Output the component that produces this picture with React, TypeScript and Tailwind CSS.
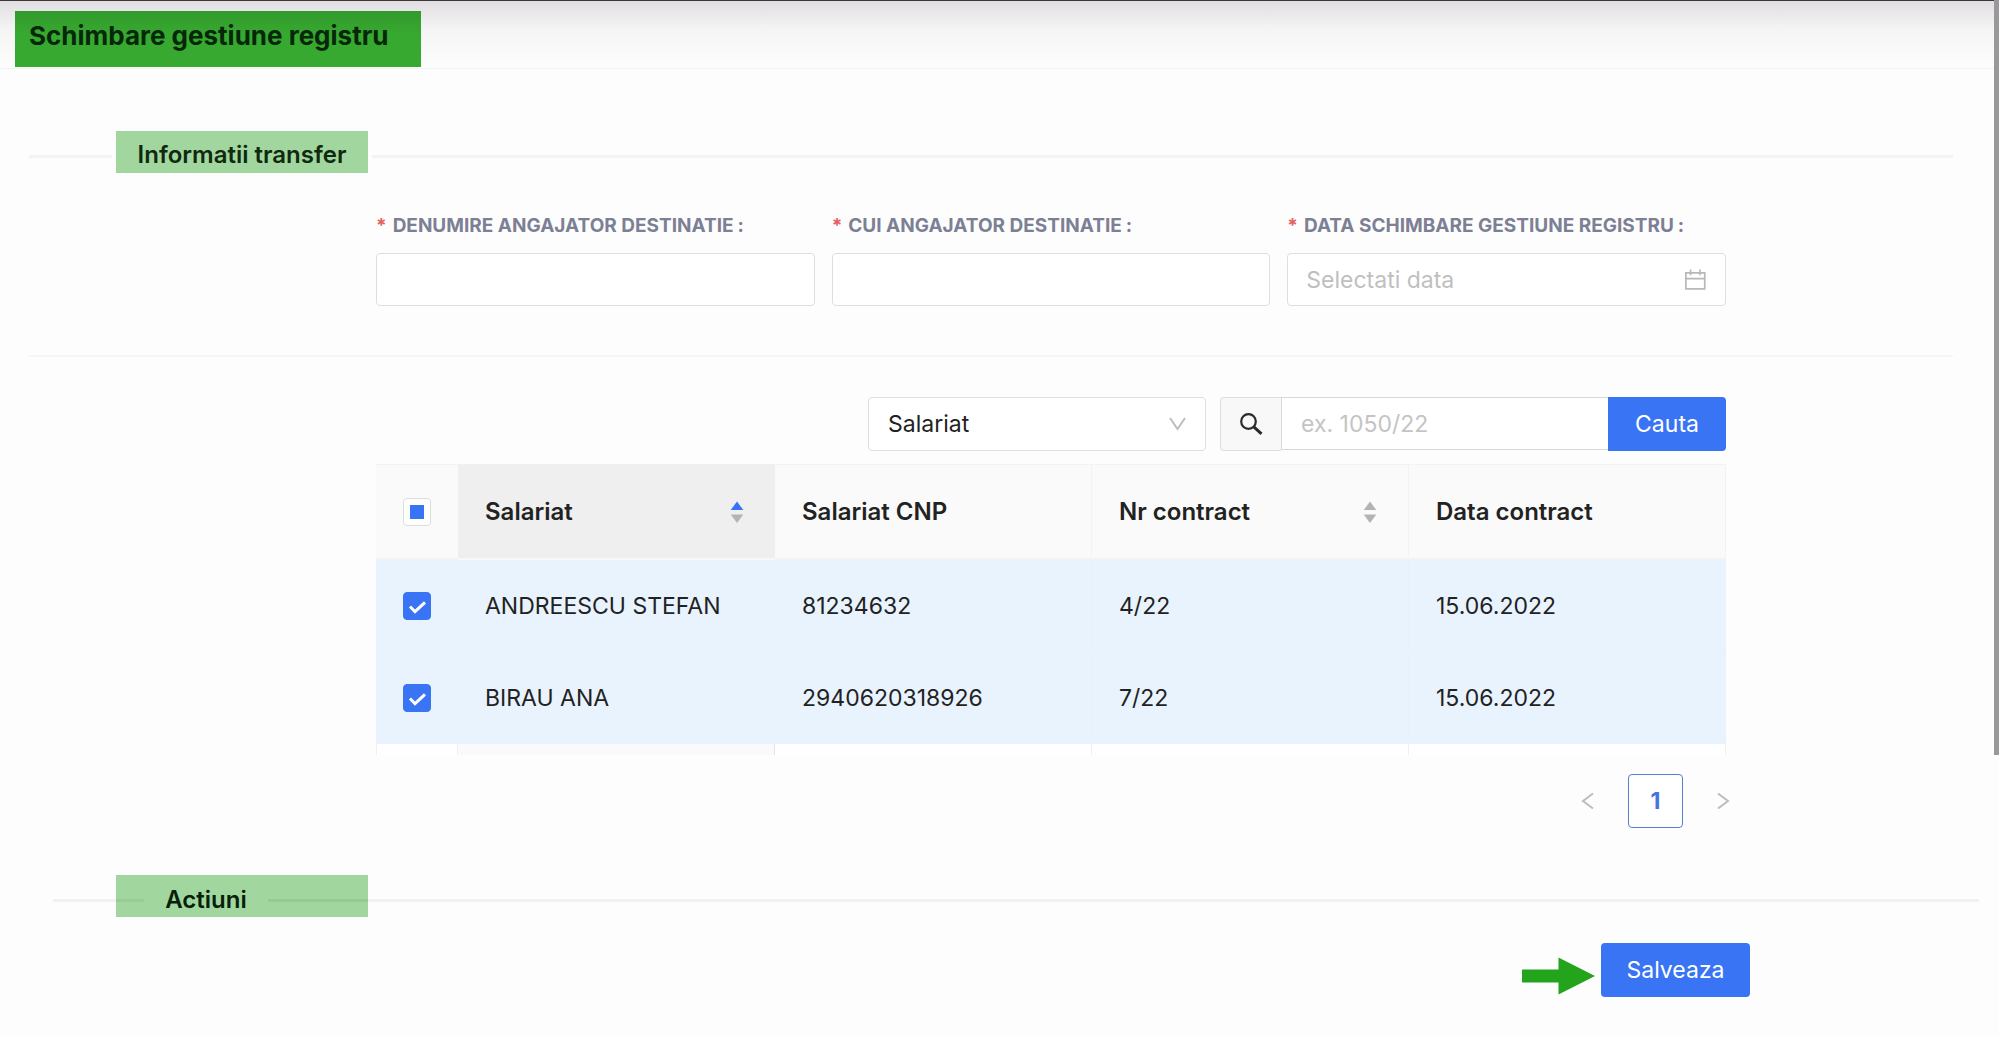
import { useState } from "react";
import type { ReactNode } from "react";

const rows = [
  { name: "ANDREESCU STEFAN", cnp: "81234632", contract: "4/22", date: "15.06.2022" },
  { name: "BIRAU ANA", cnp: "2940620318926", contract: "7/22", date: "15.06.2022" },
];

function Sorter({ active }: { active?: boolean }) {
  return (
    <svg width="14" height="24" viewBox="0 0 14 24" aria-hidden="true">
      <path d="M7 1.5 13.3 10H.7Z" fill={active ? "#3874f4" : "#b3b3b3"} />
      <path d="M7 23 13.3 14.5H.7Z" fill="#b3b3b3" />
    </svg>
  );
}

function Tick({ label, partial }: { label: string; partial?: boolean }) {
  const [on, setOn] = useState(true);
  return (
    <label className="relative mx-auto block size-7 cursor-pointer">
      <input
        type="checkbox"
        aria-label={label}
        checked={on}
        onChange={() => setOn(!on)}
        className={
          partial
            ? "block size-7 appearance-none rounded-[4px] border border-[#dcdcdc] bg-white"
            : "block size-7 appearance-none rounded-[4px] border border-[#3874f4] bg-white checked:bg-[#3874f4]"
        }
      />
      {on && partial && <span className="absolute inset-[7px] bg-[#3874f4]" />}
      {on && !partial && (
        <svg className="absolute inset-0" width="28" height="28" viewBox="0 0 28 28" fill="none" aria-hidden="true">
          <path d="m7 14.5 5 5.2 10-9.4" stroke="#fff" strokeWidth="3" />
        </svg>
      )}
    </label>
  );
}

function Field({ id, label, children }: { id: string; label: string; children: ReactNode }) {
  return (
    <div className="min-w-0">
      <label htmlFor={id} className="flex h-7 items-center whitespace-nowrap text-[19px] font-bold text-[#7c8095]">
        <span className="mr-1.5 text-[#e5605f]">*</span>
        {label}
        <span className="ml-1">:</span>
      </label>
      <div className="mt-[13px] flex h-[53px] items-center rounded-[4px] border border-[#dedede] bg-white px-[18px]">{children}</div>
    </div>
  );
}

export default function App() {
  return (
    <div className="relative min-h-screen bg-[#fdfdfd] font-['Inter','Liberation_Sans',sans-serif] text-[23px] leading-8 text-[#222]">
      <header className="flex h-[69px] items-start border-t border-b border-t-[#3c363c] border-b-[#f2f2f2] bg-linear-to-b from-[#e1dee1] via-[#f4f4f4] via-40% to-[#fdfdfd] pt-2.5 pl-[15px]">
        <h1 className="h-14 w-[406px] bg-linear-to-b from-[#329a2c] to-[#37a830] to-40% pt-[7px] pl-3.5 text-[26px] leading-9 font-bold whitespace-nowrap text-[#06270a]">
          Schimbare gestiune registru
        </h1>
      </header>
      <div className="absolute top-0 right-0 h-[755px] w-[5px] bg-[#999]" />

      <main>
        <div className="mt-[62px] mr-[46px] ml-[29px] flex items-center">
          <span className="mt-2 h-[3px] w-[83px] bg-[#f3f3f3]" />
          <h2 className="ml-1 h-[42px] w-[252px] bg-[#a1d79e] pt-2 text-center text-[24px] leading-8 font-semibold text-[#10290f]">
            Informatii transfer
          </h2>
          <span className="mt-2 ml-1 h-[3px] flex-1 bg-[#f3f3f3]" />
        </div>

        <section className="mt-[39px] mr-[273px] ml-[376px] grid grid-cols-3 gap-[17px]">
          <Field id="employer" label="DENUMIRE ANGAJATOR DESTINATIE">
            <input id="employer" type="text" className="w-full outline-none" />
          </Field>
          <Field id="cui" label="CUI ANGAJATOR DESTINATIE">
            <input id="cui" type="text" className="w-full outline-none" />
          </Field>
          <Field id="date" label="DATA SCHIMBARE GESTIUNE REGISTRU">
            <input id="date" type="text" placeholder="Selectati data" className="w-full min-w-0 outline-none placeholder:text-[#bfbfbf]" />
            <svg width="24" height="24" viewBox="0 0 24 24" fill="none" stroke="#b8b8b8" strokeWidth="1.8" aria-hidden="true">
              <path d="M2 4.5h20v17H2zM2 10.5h20M7 1v6M17 1v6" />
            </svg>
          </Field>
        </section>

        <hr className="mt-[49px] mr-[46px] ml-[29px] border-t-2 border-[#f6f6f6]" />

        <section className="mt-10 mr-[273px] ml-[376px]">
          <div className="flex items-start justify-end">
            <div className="relative w-[338px]">
              <select
                aria-label="Camp de cautare"
                className="h-[54px] w-full appearance-none rounded-[4px] border border-[#dedede] bg-white pl-[19px] outline-none"
              >
                <option>Salariat</option>
              </select>
              <svg className="pointer-events-none absolute top-5 right-5" width="17" height="14" viewBox="0 0 17 14" fill="none" aria-hidden="true">
                <path d="m1 1 7.5 11L16 1" stroke="#bdbdbd" strokeWidth="2" />
              </svg>
            </div>
            <div className="ml-3.5 flex w-[506px] items-start">
              <span className="flex h-[54px] w-[61px] items-center justify-center rounded-l-[4px] border border-r-0 border-[#dedede] bg-[#f8f8f8]">
                <svg width="24" height="24" viewBox="0 0 24 24" fill="none" stroke="#2a2a2a" strokeWidth="2.2" aria-hidden="true">
                  <circle cx="9.5" cy="9.5" r="7.3" />
                  <path d="m14.8 14.8 7.7 7" strokeWidth="3" />
                </svg>
              </span>
              <input
                type="text"
                aria-label="Cautare"
                placeholder="ex. 1050/22"
                className="h-[53px] min-w-0 flex-1 border border-r-0 border-[#d8d8d8] bg-white px-[19px] outline-none placeholder:text-[#c4c4c4]"
              />
              <button type="button" className="h-[54px] w-[118px] rounded-r-[4px] bg-[#3874f4] text-white">
                Cauta
              </button>
            </div>
          </div>

          <table className="mt-[13px] w-full table-fixed border-separate border-spacing-0 text-left">
            <colgroup>
              <col className="w-[82px]" />
              <col />
              <col />
              <col />
              <col />
            </colgroup>
            <thead className="text-[24px]">
              <tr className="h-24 bg-[#fafafa]">
                <th className="border-t border-b-2 border-[#f3f3f3] p-0">
                  <Tick label="Selecteaza tot" partial />
                </th>
                <th className="border-t border-b-2 border-t-[#efefef] border-b-[#f8f8f8] bg-[#efefef] px-[27px] font-semibold">
                  <span className="flex items-center justify-between">
                    Salariat
                    <button type="button" aria-label="Sortare salariat" className="mr-1"><Sorter active /></button>
                  </span>
                </th>
                <th className="border-t border-r border-b-2 border-[#f3f3f3] px-[27px] font-semibold">Salariat CNP</th>
                <th className="border-t border-r border-b-2 border-[#f3f3f3] px-[27px] font-semibold">
                  <span className="flex items-center justify-between">
                    Nr contract
                    <button type="button" aria-label="Sortare contract" className="mr-1"><Sorter /></button>
                  </span>
                </th>
                <th className="border-t border-r border-b-2 border-[#f3f3f3] px-[27px] font-semibold">Data contract</th>
              </tr>
            </thead>
            <tbody>
              {rows.map((r) => (
                <tr key={r.name} className="h-[92px] bg-[#e8f3fe]">
                  <td className="border-b border-[#e9f0fc] p-0"><Tick label={r.name} /></td>
                  <td className="border-r border-b border-[#e9f0fc] px-[27px]">{r.name}</td>
                  <td className="border-r border-b border-[#e9f0fc] px-[27px]">{r.cnp}</td>
                  <td className="border-r border-b border-[#e9f0fc] px-[27px]">{r.contract}</td>
                  <td className="border-b border-[#e9f0fc] px-[27px]">{r.date}</td>
                </tr>
              ))}
              <tr className="h-[11px] bg-white">
                <td className="border-x border-[#f0f0f0] p-0" />
                <td className="border-r border-[#e4e4e4] bg-[#fafafa] p-0" />
                <td className="border-r border-[#f0f0f0] p-0" />
                <td className="border-r border-[#f0f0f0] p-0" />
                <td className="border-r border-[#f0f0f0] p-0" />
              </tr>
            </tbody>
          </table>
        </section>

        <nav aria-label="Paginare" className="mt-[19px] mr-[269px] flex items-center justify-end gap-[34px]">
          <button type="button" aria-label="Pagina anterioara">
            <svg width="13" height="18" viewBox="0 0 13 18" fill="none" aria-hidden="true">
              <path d="M12 1.5 2 9l10 7.5" stroke="#bdbdbd" strokeWidth="2" />
            </svg>
          </button>
          <button type="button" aria-current="page" className="h-[54px] w-[55px] rounded-[4px] border border-[#5580cf] bg-white font-bold text-[#4474dc]">
            1
          </button>
          <button type="button" aria-label="Pagina urmatoare">
            <svg width="13" height="18" viewBox="0 0 13 18" fill="none" aria-hidden="true">
              <path d="m1 1.5 10 7.5-10 7.5" stroke="#bdbdbd" strokeWidth="2" />
            </svg>
          </button>
        </nav>

        <div className="mt-[47px] mr-5 ml-[53px] flex items-center">
          <span className="mt-2 h-[3px] w-[63px] bg-[#f1f1f1]" />
          <h2 className="flex h-[42px] w-[252px] items-center bg-[#a1d79e] text-[24px] leading-8 font-semibold text-[#06200a]">
            <span className="mt-2 h-[3px] w-7 bg-[#9acb97]" />
            <span className="mt-2 w-[124px] text-center">Actiuni</span>
            <span className="mt-2 h-[3px] flex-1 bg-[#96c994]" />
          </h2>
          <span className="mt-2 h-[3px] flex-1 bg-[#f1f1f1]" />
        </div>

        <div className="mt-[26px] mr-[249px] flex items-center justify-end gap-1.5 pb-10">
          <svg className="mt-3" width="73" height="38" viewBox="0 0 73 38" aria-hidden="true">
            <path d="M0 12.5h36.5V.5L73 19 36.5 37.5v-12H0Z" fill="#24a31c" />
          </svg>
          <button type="button" className="h-[54px] w-[149px] rounded-[4px] bg-[#3874f4] text-white">
            Salveaza
          </button>
        </div>
      </main>
    </div>
  );
}
